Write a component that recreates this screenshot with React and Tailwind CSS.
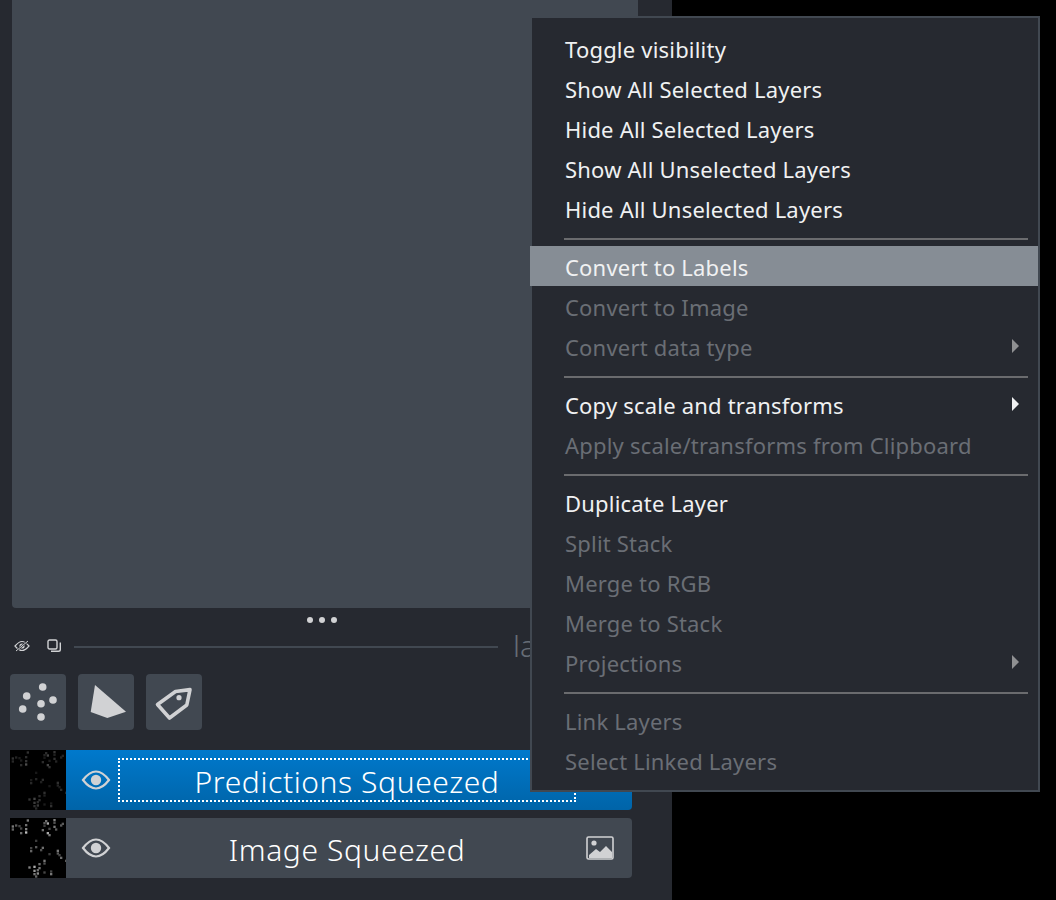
import React from 'react';

// pixels of the image thumbnail, read off the reference (x, y in a 168x180 grid, grey value)
const bright = [
  [50,4,120],[105,6,110],[130,3,130],[100,12,90],[110,13,170],[130,11,80],[155,14,90],
  [5,22,120],[15,19,90],[25,21,70],[45,18,110],[100,20,60],[130,23,120],[150,19,90],
  [5,31,100],[30,28,70],[45,30,130],[95,33,110],[115,29,70],[135,31,90],
  [30,42,110],[45,40,190],[110,42,170],[115,48,120],
  [75,65,60],[60,87,70],[75,84,90],[95,86,110],[60,96,100],[90,93,80],[140,95,120],
  [115,105,60],[140,103,90],[145,108,70],[150,116,110],[100,125,120],[165,125,90],
  [85,135,110],[100,133,80],[55,145,130],[70,143,170],[85,147,120],[70,155,150],[80,153,110],
  [70,165,120],[80,163,140],[100,160,70],[120,165,120],[75,172,100],[120,157,70]
];

function Thumb({ dim }) {
  return (
    <svg width="56" height="60" viewBox="0 0 168 180" className="shrink-0 bg-black block">
      {bright.map(([x, y, v], i) => {
        const c = dim ? Math.round(v * 0.4) : v;
        return <rect key={i} x={x} y={y} width="7" height="7" fill={`rgb(${c},${c},${c})`} />;
      })}
    </svg>
  );
}

function Eye() {
  return (
    <svg width="52" height="60" viewBox="0 0 52 60" className="shrink-0">
      <path d="M17 30 C22 23.5 26 21.5 30 21.5 C34 21.5 38 23.5 43 30 C38 36.5 34 38.5 30 38.5 C26 38.5 22 36.5 17 30 Z" fill="none" stroke="#d1d2d4" strokeWidth="2.2" />
      <circle cx="30" cy="30" r="5.2" fill="#d1d2d4" />
    </svg>
  );
}

function Row({ label, arrow, disabled, active }) {
  return (
    <div className={`h-10 flex items-center justify-between pl-[33px] pr-[19px] ${active ? '-ml-[2px] pl-[35px] bg-[#868d95] text-[#f0f1f2]' : disabled ? 'text-[#6a6e75]' : 'text-[#f0f1f2]'}`}>
      <span className="pt-[2px] tracking-[0.2px]">{label}</span>
      {arrow && (
        <svg width="7" height="14" viewBox="0 0 7 14">
          <path d="M0 0 L7 7 L0 14 Z" fill={disabled ? '#8f9092' : '#f0f1f2'} />
        </svg>
      )}
    </div>
  );
}

function Sep() {
  return <div className="h-[2px] mt-[10px] mb-[6px] ml-[32px] mr-[10px] bg-[#6a6b6e]" />;
}

export default function App() {
  return (
    <div className="relative w-[1056px] h-[900px] overflow-hidden bg-black font-['Noto_Sans',sans-serif]">
      <div className="w-[672px] h-full bg-[#262930] flex flex-col">
        <div className="mx-3 w-[626px] h-[608px] shrink-0 bg-[#414851] rounded-b-[4px]" />

        <div className="h-6 w-[644px] shrink-0 flex items-center justify-center gap-[6px]">
          <div className="w-[6px] h-[6px] rounded-full bg-[#d1d2d4]" />
          <div className="w-[6px] h-[6px] rounded-full bg-[#d1d2d4]" />
          <div className="w-[6px] h-[6px] rounded-full bg-[#d1d2d4]" />
        </div>

        <div className="h-7 shrink-0 flex items-center pl-[14px]">
          <svg width="16" height="14" viewBox="0 0 16 14" className="shrink-0">
            <path d="M1 7 C4 3.5 6 2.5 8 2.5 C10 2.5 12 3.5 15 7 C12 10.5 10 11.5 8 11.5 C6 11.5 4 10.5 1 7 Z" fill="none" stroke="#d1d2d4" strokeWidth="1.2" />
            <circle cx="8" cy="7" r="2.6" fill="#d1d2d4" />
            <path d="M2 12 L14 2" stroke="#262930" strokeWidth="2.2" />
            <path d="M2 12 L14 2" stroke="#d1d2d4" strokeWidth="1" />
          </svg>
          <svg width="15" height="14" viewBox="0 0 15 14" className="ml-[17px] shrink-0">
            <rect x="1" y="1" width="9" height="9" rx="1.5" fill="none" stroke="#d1d2d4" strokeWidth="1.4" />
            <path d="M4 12.3 H11.5 Q13.3 12.3 13.3 10.5 V3.5" fill="none" stroke="#d1d2d4" strokeWidth="1.4" />
          </svg>
          <div className="ml-[12px] mt-[2px] w-[424px] h-[2px] bg-[#414851]" />
          <span className="ml-[15px] text-[30px] leading-none font-light text-[#666d76]">layer</span>
        </div>

        <div className="mt-[14px] pl-[10px] flex gap-3 shrink-0">
          <div className="w-14 h-14 rounded bg-[#414851]">
            <svg width="56" height="56" viewBox="0 0 56 56">
              <g fill="#d1d2d4">
                <circle cx="32.7" cy="13" r="3.8" />
                <circle cx="16.7" cy="22" r="3.8" />
                <circle cx="43" cy="26" r="3.8" />
                <circle cx="31" cy="29.7" r="3.8" />
                <circle cx="12.7" cy="35" r="3.8" />
                <circle cx="31" cy="43" r="3.8" />
              </g>
            </svg>
          </div>
          <div className="w-14 h-14 rounded bg-[#414851]">
            <svg width="56" height="56" viewBox="0 0 56 56">
              <path d="M17 11 L48 37.7 L29.3 44 L12.7 38 Z" fill="#d1d2d4" />
            </svg>
          </div>
          <div className="w-14 h-14 rounded bg-[#414851]">
            <svg width="56" height="56" viewBox="0 0 56 56">
              <path d="M44 15.6 L29.5 17.5 L11.5 30.5 L23.5 44 L40.8 31 Z" fill="none" stroke="#d1d2d4" strokeWidth="3.6" strokeLinejoin="round" />
              <circle cx="33" cy="23.7" r="2.6" fill="#d1d2d4" />
            </svg>
          </div>
        </div>

        <div className="mt-5 ml-[10px] w-[622px] flex flex-col gap-2 shrink-0">
          <div className="h-[60px] flex items-center rounded-r-[4px] bg-gradient-to-b from-[#0079cc] to-[#0064a8]">
            <Thumb dim />
            <Eye />
            <div className="w-[458px] h-[44px] pt-1 flex items-center justify-center border-2 border-dotted border-white text-white text-[30px] leading-none tracking-[0.6px] font-light">
              Predictions Squeezed
            </div>
          </div>
          <div className="h-[60px] flex items-center rounded-r-[4px] bg-[#414851]">
            <Thumb />
            <Eye />
            <div className="w-[458px] h-[44px] pt-1 flex items-center justify-center text-white text-[30px] leading-none tracking-[0.6px] font-light">
              Image Squeezed
            </div>
            <svg width="28" height="24" viewBox="0 0 28 24" className="ml-[10px] shrink-0">
              <rect x="1" y="1" width="26" height="22" rx="1.5" fill="none" stroke="#d1d2d4" strokeWidth="1.6" />
              <circle cx="8" cy="7" r="2.6" fill="#d1d2d4" />
              <path d="M3 22 L3 19 L10 13 L14 16 L20 10 L26 16 L26 22 Z" fill="#d1d2d4" />
            </svg>
          </div>
        </div>
      </div>

      {/* Context menu */}
      <div className="absolute left-[530px] top-4 w-[510px] h-[776px] border-2 border-[#414851] bg-[#262930] pt-[10px] text-[22px] leading-none">
        <Row label="Toggle visibility" />
        <Row label="Show All Selected Layers" />
        <Row label="Hide All Selected Layers" />
        <Row label="Show All Unselected Layers" />
        <Row label="Hide All Unselected Layers" />
        <Sep />
        <Row label="Convert to Labels" active />
        <Row label="Convert to Image" disabled />
        <Row label="Convert data type" disabled arrow />
        <Sep />
        <Row label="Copy scale and transforms" arrow />
        <Row label="Apply scale/transforms from Clipboard" disabled />
        <Sep />
        <Row label="Duplicate Layer" />
        <Row label="Split Stack" disabled />
        <Row label="Merge to RGB" disabled />
        <Row label="Merge to Stack" disabled />
        <Row label="Projections" disabled arrow />
        <Sep />
        <Row label="Link Layers" disabled />
        <Row label="Select Linked Layers" disabled />
      </div>
    </div>
  );
}
